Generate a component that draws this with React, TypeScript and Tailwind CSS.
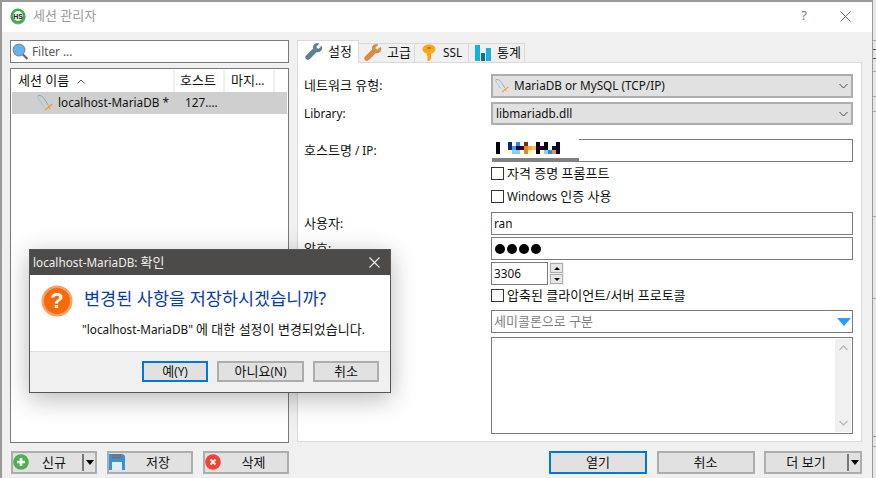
import React from "react";

const FONT = "[font-family:'Noto_Sans','Noto_Sans_CJK_KR',sans-serif]";

function T({ children }: { children: string }) {
  const parts = children.split(/([\uAC00-\uD7A3]+(?:\s+[\uAC00-\uD7A3]+)*)/);
  return (
    <span className="whitespace-pre">
      {parts.map((p, i) =>
        i % 2 === 1 ? (
          <span key={i} className="text-[13px]">{p}</span>
        ) : (
          <span key={i}>{p}</span>
        )
      )}
    </span>
  );
}

function Wrench({ color, dark }: { color: string; dark: string }) {
  return (
    <svg width="18" height="18" viewBox="0 0 18 18" className="shrink-0">
      <path d="M16.5 3.2 13.6 6l-2-.6-.6-2L13.8.7C11.5-.1 9 1 8.4 3.2c-.2.8-.2 1.6.1 2.3L1.3 12.7c-.9.9-.9 2.3 0 3.2s2.3.9 3.2 0l7.200-7.200c.8.3 1.600.3 2.400.1 2.200-.6 3.300-3.100 2.400-5.600Z" fill={color} stroke={dark} strokeWidth="0.5" />
    </svg>
  );
}

function Key() {
  return (
    <svg width="14" height="18" viewBox="0 0 14 18" className="shrink-0">
      <path d="M7 .5c3.300 0 6.500 1.900 6.500 4.500S10.800 9.300 9 9.800V15l-2 2.500-2-1.800 1-1-1-1 1-1-1-1.200V9.800C3.200 9.300.5 7.600.5 5S3.700.5 7 .5Z" fill="#fba60f" />
      <rect x="5" y="3" width="4" height="2" rx="1" fill="#c97b05" />
    </svg>
  );
}

function Bars() {
  return (
    <svg width="18" height="18" viewBox="0 0 18 18" className="shrink-0">
      <rect x="1" y="1" width="5" height="16" fill="#16b2d8" />
      <rect x="7" y="9" width="4" height="8" fill="#0f6f9c" />
      <rect x="12" y="4" width="5" height="13" fill="#16b2d8" />
    </svg>
  );
}

function Dolphin({ size = 16 }: { size?: number }) {
  return (
    <svg width={size} height={size} viewBox="0 0 16 16" className="shrink-0" fill="none">
      <path d="M1 .5C4 .3 6 1.600 7.500 4c1.200 2 2.300 4 4 6.500" stroke="#7ea9bb" strokeWidth="1" />
      <path d="M1 .5C.7 3 1.700 4.800 3.500 6c.8 2 2 4 4 5.500" stroke="#9cc2d0" strokeWidth="1" />
      <path d="M8 15l4-3.500L15.500 9M11.500 11l1.500 3" stroke="#f59a23" strokeWidth="1.200" />
    </svg>
  );
}

function Btn({ children, className = "", primary = false }: { children?: React.ReactNode; className?: string; primary?: boolean }) {
  return (
    <div className={`flex items-center justify-center bg-[#e1e1e1] text-[11.75px] text-[#111] ${primary ? "border-2 border-[#0078d7]" : "border-2 border-[#adadad]"} ${className}`}>
      {children}
    </div>
  );
}

function Field({ children, className = "" }: { children?: React.ReactNode; className?: string }) {
  return <div className={`flex h-[23px] items-center border border-[#7a7a7a] bg-white pl-[2px] text-[11.75px] text-[#111] ${className}`}>{children}</div>;
}

function Chevron() {
  return (
    <svg width="9" height="6" viewBox="0 0 9 6" fill="none">
      <path d="M.5 1l4 4 4-4" stroke="#444" strokeWidth="1" />
    </svg>
  );
}

function Select({ children, className = "" }: { children: React.ReactNode; className?: string }) {
  return (
    <div className={`flex items-center justify-between border-2 border-[#adadad] bg-[#e1e1e1] pl-[2px] pr-[3px] text-[11.75px] text-[#111] ${className}`}>
      <div className="flex items-center gap-[5px]">{children}</div>
      <Chevron />
    </div>
  );
}

function Check({ label }: { label: string }) {
  return (
    <div className="flex h-full items-center gap-[3px] text-[11.75px] text-[#111]">
      <div className="h-[13px] w-[13px] border border-[#333] bg-white" />
      <span><T>{label}</T></span>
    </div>
  );
}

function Row({ label, className, children }: { label?: string; className: string; children: React.ReactNode }) {
  return (
    <div className={`flex ${className}`}>
      <div className="flex w-[187px] shrink-0 items-center text-[11.75px] text-[#111]">{label ? <T>{label}</T> : null}</div>
      <div className="min-w-0 flex-1">{children}</div>
    </div>
  );
}

const pixels: [number, number, string][] = [
  [17, 3, "#0a2a6a"], [25, 3, "#2a8be0"], [33, 3, "#7b2c00"], [45, 3, "#000000"], [53, 3, "#000000"], [65, 3, "#14002e"],
  [17, 7, "#0a2a6a"], [21, 7, "#3fa0ee"], [25, 7, "#17002f"], [29, 7, "#3a0030"], [33, 7, "#e08a2c"], [37, 7, "#f5a74a"], [41, 7, "#f5c06a"], [45, 7, "#17002f"], [49, 7, "#2a0030"], [53, 7, "#000000"], [61, 7, "#0a1030"], [65, 7, "#14002e"],
  [13, 11, "#fffbe0"], [17, 11, "#fff7c0"], [21, 11, "#85d0fb"], [25, 11, "#85d0fb"], [33, 11, "#e08a2c"], [37, 11, "#fff0b0"], [45, 11, "#000000"], [49, 11, "#fff7c0"], [53, 11, "#85d0fb"], [57, 11, "#2a8be0"], [61, 11, "#e8963a"], [65, 11, "#14002e"],
];

function SplitArrow() {
  return (
    <>
      <span className="absolute right-[11px] top-[1px] h-[17px] w-[2px] bg-[#777]" />
      <span className="absolute right-[1px] top-[7px] h-0 w-0 border-x-[4.5px] border-t-[5px] border-x-transparent border-t-black" />
    </>
  );
}

export default function App() {
  return (
    <div className={`relative flex h-[478px] w-[876px] overflow-hidden bg-[#e6e6e6] ${FONT}`}>
      {/* main window */}
      <div className="flex h-[478px] w-[873px] shrink-0 flex-col border-l-2 border-r border-t-2 border-[#9a9a9a] bg-[#f0f0f0]">
        {/* title bar */}
        <div className="flex h-[30px] shrink-0 items-center justify-between bg-white pb-[2px] pl-[8px] pr-[21px]">
          <div className="flex items-center gap-[7px]">
            <svg width="16" height="17" viewBox="0 0 16 17">
              <circle cx="8" cy="9" r="7.500" fill="#9a9a9a" />
              <circle cx="8" cy="8" r="7.500" fill="#3fae49" />
              <circle cx="8" cy="8" r="5" fill="#eef5ee" />
              <text x="8" y="10.500" textAnchor="middle" fontSize="7" fontWeight="700" fill="#222" fontFamily="'Liberation Sans',sans-serif">HS</text>
            </svg>
            <span className="text-[13px] text-[#9a9a9a]">세션 관리자</span>
          </div>
          <div className="flex items-center gap-[33px] text-[#777]">
            <span className="text-[13px]">?</span>
            <svg width="11" height="11" viewBox="0 0 11 11"><path d="M.5.500l10 10M10.500.500l-10 10" stroke="#666" strokeWidth="1" /></svg>
          </div>
        </div>

        {/* body */}
        <div className="flex min-h-0 flex-1 pl-[8px] pt-[8px]">
          {/* left column */}
          <div className="flex w-[279px] shrink-0 flex-col">
            <div className="flex h-[23px] items-center gap-[3px] border border-[#7a7a7a] bg-white pl-[1px] text-[11.75px] text-[#555]">
              <svg width="17" height="17" viewBox="0 0 17 17">
                <path d="M10.500 11l5 5" stroke="#666" strokeWidth="2.200" />
                <circle cx="7" cy="7" r="5.800" fill="#62b3f5" stroke="#8a8a8a" strokeWidth="1.200" />
              </svg>
              <span>Filter ...</span>
            </div>
            <div className="mt-[5px] h-[375px] border border-[#7a7a7a] bg-white p-px">
              <div className="flex h-[22px] text-[11.75px] text-[#111]">
                <div className="flex w-[163px] items-center gap-[8px] border-r-2 border-[#f0f0f0] pl-[6px]">
                  <span><T>세션 이름</T></span>
                  <svg width="8" height="5" viewBox="0 0 8 5" fill="none"><path d="M.5 4.500L4 1l3.500 3.500" stroke="#555" /></svg>
                </div>
                <div className="flex w-[50px] items-center border-r-2 border-[#f0f0f0] pl-[5px]"><T>호스트</T></div>
                <div className="flex w-[50px] items-center border-r-2 border-[#f0f0f0] pl-[6px]"><T>마지...</T></div>
              </div>
              <div className="flex h-[22px] items-center bg-[#cfcfcf] text-[11.75px] text-[#111]">
                <div className="flex w-[163px] items-center gap-[5px] pl-[25px]">
                  <Dolphin />
                  <span className="whitespace-nowrap">localhost-MariaDB *</span>
                </div>
                <span className="pl-[10px]">127....</span>
              </div>
            </div>
            <div className="mt-[8px] flex justify-between pl-px">
              <Btn className="relative h-[23px] w-[86px]">
                <svg width="16" height="16" viewBox="0 0 16 16" className="absolute left-0 top-[1px]">
                  <circle cx="8" cy="8" r="7.800" fill="#4caf50" />
                  <path d="M8 4v8M4 8h8" stroke="#fff" strokeWidth="2.600" />
                </svg>
                <span><T>신규</T></span>
                <SplitArrow />
              </Btn>
              <Btn className="relative h-[23px] w-[86px]">
                <svg width="16" height="16" viewBox="0 0 16 16" className="absolute left-0 top-[1px]">
                  <path d="M0 0h14l2 2v14H0Z" fill="#3d8fd8" />
                  <rect x="3" y="0" width="9" height="5" fill="#66788a" />
                  <rect x="3" y="8" width="10" height="8" fill="#dfeefa" />
                </svg>
                <span className="ml-[16px]"><T>저장</T></span>
              </Btn>
              <Btn className="relative h-[23px] w-[86px]">
                <svg width="16" height="16" viewBox="0 0 16 16" className="absolute left-0 top-[1px]">
                  <circle cx="8" cy="8" r="7.800" fill="#f44336" />
                  <path d="M5.500 5.500l5 5M10.500 5.500l-5 5" stroke="#fff" strokeWidth="2" />
                </svg>
                <span className="ml-[15px]"><T>삭제</T></span>
              </Btn>
            </div>
          </div>

          {/* right column */}
          <div className="ml-[8px] flex w-[565px] shrink-0 flex-col">
            <div className="relative z-10 flex h-[23px] items-end text-[11.75px] text-[#111]">
              <div className="flex h-[23px] w-[62px] items-center gap-[5px] border border-b-0 border-[#d9d9d9] bg-white pl-[7px]">
                <Wrench color="#5d7f98" dark="#3f5f78" />
                <span><T>설정</T></span>
              </div>
              <div className="flex h-[20px] w-[56px] items-center gap-[5px] border border-l-0 border-[#d9d9d9] bg-[#f0f0f0] pl-[5px]">
                <Wrench color="#e08a3c" dark="#b9691f" />
                <span><T>고급</T></span>
              </div>
              <div className="flex h-[20px] w-[54px] items-center gap-[7px] border border-l-0 border-[#d9d9d9] bg-[#f0f0f0] pl-[7px]">
                <Key />
                <span>SSL</span>
              </div>
              <div className="flex h-[20px] w-[56px] items-center gap-[5px] border border-l-0 border-[#d9d9d9] bg-[#f0f0f0] pl-[5px]">
                <Bars />
                <span><T>통계</T></span>
              </div>
            </div>
            <div className="-mt-px h-[380px] border border-[#d9d9d9] bg-white pl-[6px] pr-[8px] pt-[11px]">
              <Row label="네트워크 유형:" className="h-[24px]">
                <Select className="h-[24px]"><Dolphin size={14} /><span>MariaDB or MySQL (TCP/IP)</span></Select>
              </Row>
              <Row label="Library:" className="mt-[4px] h-[23px]">
                <Select className="h-[23px]"><span className="ml-px">libmariadb.dll</span></Select>
              </Row>
              <Row label="호스트명 / IP:" className="mt-[14px] h-[23px]">
                <div className="relative">
                  <Field />
                  <svg width="88" height="23" viewBox="0 0 88 23" className="absolute left-0 top-0" shapeRendering="crispEdges">
                    <rect width="88" height="23" fill="#fff" />
                    <rect x="1" y="19" width="87" height="4" fill="#808080" />
                    <rect x="5" y="3" width="4" height="12" fill="#000" />
                    {pixels.map(([x, y, c], i) => (
                      <rect key={i} x={x} y={y} width={4} height={4} fill={c} />
                    ))}
                  </svg>
                </div>
              </Row>
              <Row className="h-[23px]"><Check label="자격 증명 프롬프트" /></Row>
              <Row className="h-[23px]"><Check label="Windows 인증 사용" /></Row>
              <Row label="사용자:" className="mt-[4px] h-[23px]"><Field>ran</Field></Row>
              <Row label="암호:" className="mt-[2px] h-[23px]">
                <Field>
                  <span className="ml-px flex gap-[2px]">
                    {[0, 1, 2, 3].map((i) => <span key={i} className="h-[10px] w-[10px] rounded-full bg-black" />)}
                  </span>
                </Field>
              </Row>
              <Row label="포트:" className="mt-[2px] h-[23px]">
                <div className="flex items-center gap-px">
                  <Field className="w-[57px]">3306</Field>
                  <div className="flex h-[23px] w-[15px] flex-col gap-px bg-[#f0f0f0] p-px">
                    <div className="flex flex-1 items-center justify-center border border-[#adadad] bg-[#e6e6e6]">
                      <span className="h-0 w-0 border-x-[3px] border-b-[3px] border-x-transparent border-b-black" />
                    </div>
                    <div className="flex flex-1 items-center justify-center border border-[#adadad] bg-[#e6e6e6]">
                      <span className="h-0 w-0 border-x-[3px] border-t-[3px] border-x-transparent border-t-black" />
                    </div>
                  </div>
                </div>
              </Row>
              <Row className="h-[21px]"><Check label="압축된 클라이언트/서버 프로토콜" /></Row>
              <Row className="mt-[4px] h-[23px]">
                <Field className="justify-between pr-px">
                  <span className="text-[#808080]"><T>세미콜론으로 구분</T></span>
                  <span className="h-0 w-0 border-x-[7.5px] border-t-[8px] border-x-transparent border-t-[#2e9bf5]" />
                </Field>
              </Row>
              <Row className="mt-[4px] h-[97px]">
                <div className="flex h-[97px] justify-end border border-[#7a7a7a] bg-white p-px">
                  <div className="flex w-[16px] flex-col items-center justify-between bg-[#f0f0f0] py-[6px]">
                    <svg width="9" height="6" viewBox="0 0 9 6" fill="none"><path d="M.5 5l4-4 4 4" stroke="#bbb" strokeWidth="1.500" /></svg>
                    <svg width="9" height="6" viewBox="0 0 9 6" fill="none"><path d="M.5 1l4 4 4-4" stroke="#bbb" strokeWidth="1.500" /></svg>
                  </div>
                </div>
              </Row>
            </div>
            <div className="mt-[9px] flex justify-between pl-[252px]">
              <Btn primary className="h-[23px] w-[98px]"><T>열기</T></Btn>
              <Btn className="h-[23px] w-[98px]"><T>취소</T></Btn>
              <Btn className="relative h-[23px] w-[98px]">
                <span className="mr-[14px]"><T>더 보기</T></span>
                <SplitArrow />
              </Btn>
            </div>
          </div>
        </div>
      </div>

      {/* window behind, mostly hidden */}
      <div className="flex w-[3px] flex-col pt-[40px]">
        <div className="h-px bg-[#aaa]" />
        <div className="mt-[8px] h-[10px] border-y border-[#555]" />
        <div className="mt-[12px] h-px bg-[#aaa]" />
        <div className="mt-[24px] h-px bg-[#aaa]" />
        <div className="mt-[14px] h-px bg-[#aaa]" />
        <div className="mt-[104px] h-px bg-[#aaa]" />
        <div className="mt-[81px] h-px bg-[#aaa]" />
        <div className="mt-[137px] h-px bg-[#5b9bd5]" />
        <div className="mt-[9px] h-px bg-[#aaa]" />
      </div>

      {/* dialog */}
      <div className="absolute left-[29px] top-[249px] flex h-[144px] w-[362px] flex-col border border-[#555] bg-white shadow-[0_6px_24px_rgba(0,0,0,0.28)]">
        <div className="flex h-[25px] shrink-0 items-center justify-between bg-[#4d4b49] pl-[3px] pr-[10px] text-[11.75px] text-[#eee]">
          <span><T>localhost-MariaDB: 확인</T></span>
          <svg width="11" height="11" viewBox="0 0 11 11"><path d="M.5.500l10 10M10.500.500l-10 10" stroke="#eee" strokeWidth="1.100" /></svg>
        </div>
        <div className="flex h-[76px] shrink-0 gap-[11px] pl-[11px] pt-[10px]">
          <svg width="32" height="32" viewBox="0 0 32 32" className="shrink-0">
            <circle cx="16" cy="16" r="15.500" fill="#f9a066" />
            <circle cx="16" cy="16" r="13" fill="#f56b0a" />
            <text x="16" y="23" textAnchor="middle" fontSize="22" fontWeight="700" fill="#fff" fontFamily="'Liberation Sans',sans-serif">?</text>
          </svg>
          <div className="min-w-0">
            <div className="mt-[2px] whitespace-nowrap text-[17.5px] leading-[22px] text-[#0a3ca8]">변경된 사항을 저장하시겠습니까?</div>
            <div className="ml-[-2px] mt-[11px] whitespace-nowrap text-[11.75px] leading-[18px] text-[#111]"><T>"localhost-MariaDB" 에 대한 설정이 변경되었습니다.</T></div>
          </div>
        </div>
        <div className="flex flex-1 items-start justify-end gap-[9px] border-t border-[#dfdfdf] bg-[#f0f0f0] pr-[11px] pt-[9px]">
          <Btn primary className="h-[21px] w-[66px]"><T>예(Y)</T></Btn>
          <Btn className="h-[21px] w-[87px]"><T>아니요(N)</T></Btn>
          <Btn className="h-[21px] w-[66px]"><T>취소</T></Btn>
        </div>
      </div>
    </div>
  );
}
